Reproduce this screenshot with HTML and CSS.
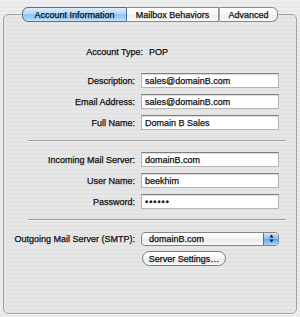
FILE: index.html
```html
<!DOCTYPE html>
<html lang="en">
<head>
    <meta charset="UTF-8">
    <title>Accounts</title>
    <link rel="stylesheet" href="styles.css">
</head>
<body>
    <div class="prefs">
        <div class="tabs">
            <span class="tab tab-account active">Account Information</span>
            <span class="tab tab-mailbox">Mailbox Behaviors</span>
            <span class="tab tab-advanced">Advanced</span>
        </div>

        <div class="panel">
            <div class="row info">
                <label>Account Type:</label>
                <span>POP</span>
            </div>

            <div class="group first">
                <div class="row">
                    <label>Description:</label>
                    <input class="field" type="text" value="sales@domainB.com">
                </div>
                <div class="row">
                    <label>Email Address:</label>
                    <input class="field" type="text" value="sales@domainB.com">
                </div>
                <div class="row">
                    <label>Full Name:</label>
                    <input class="field" type="text" value="Domain B Sales">
                </div>
            </div>

            <div class="separator"></div>

            <div class="group">
                <div class="row">
                    <label>Incoming Mail Server:</label>
                    <input class="field" type="text" value="domainB.com">
                </div>
                <div class="row">
                    <label>User Name:</label>
                    <input class="field" type="text" value="beekhim">
                </div>
                <div class="row">
                    <label>Password:</label>
                    <input class="field" type="password" value="secret">
                </div>
            </div>

            <div class="separator"></div>

            <div class="group smtp">
                <div class="row">
                    <label>Outgoing Mail Server (SMTP):</label>
                    <div class="popup">
                        <span>domainB.com</span>
                        <span class="arrows">
                            <svg width="5" height="9" viewBox="0 0 5 9">
                                <path d="M2.5 0.5 L4.5 3.5 L0.5 3.5 Z M2.5 8.5 L4.5 5.5 L0.5 5.5 Z" fill="#111"/>
                            </svg>
                        </span>
                    </div>
                </div>
                <div class="row">
                    <span></span>
                    <button class="push">Server Settings…</button>
                </div>
            </div>
        </div>
    </div>
</body>
</html>
```

FILE: styles.css
```css
body {
    margin: 0;
    width: 300px;
    height: 317px;
    overflow: hidden;
    font-family: 'Liberation Sans', Arial, sans-serif;
    font-size: 9px;
    color: #111;
    -webkit-text-stroke: 0.25px #111;
    background: repeating-linear-gradient(#eeeeee 0 2px, #e8e8e8 2px 4px);
}

.prefs {
    padding: 7px 3px 0 3px;
}

/* segmented tab control */
.tabs {
    position: relative;
    z-index: 1;
    display: flex;
    justify-content: center;
    height: 15px;
    margin-bottom: -8px;
}

.tab {
    display: flex;
    align-items: center;
    justify-content: center;
    box-sizing: border-box;
    height: 15px;
    border: 1px solid #8a8a8a;
    border-left: none;
    background: linear-gradient(#ffffff 0%, #f7f7f7 50%, #ececec 51%, #fafafa 100%);
}

.tab-account {
    width: 105px;
    border-left: 1px solid #5a6f8c;
    border-color: #5a6f8c;
    border-radius: 6px 0 0 6px;
}

.tab-mailbox { width: 92px; }

.tab-advanced {
    width: 59px;
    border-left: 1px solid #b0b0b0;
    border-radius: 0 6px 6px 0;
}

.tab.active {
    background: linear-gradient(#dcedfd 0%, #b4d7f7 45%, #8cc2f3 52%, #a9d6fb 85%, #cde8fd 100%);
}

/* tab view box */
.panel {
    box-sizing: border-box;
    height: 300px;
    padding-top: 29px;
    border: 1px solid #a3a3a3;
    border-radius: 5px;
    background: repeating-linear-gradient(#e7e7e7 0 2px, #e2e2e2 2px 4px);
    box-shadow: 0 1px 0 #f8f8f8;
}

.row {
    display: grid;
    grid-template-columns: 131px 138px;
    column-gap: 6px;
    align-items: center;
    height: 15px;
}

.row label {
    text-align: right;
    white-space: nowrap;
}

.row.info {
    grid-template-columns: 139px auto;
}

.group {
    display: flex;
    flex-direction: column;
    gap: 6px;
}

.group.first {
    margin-top: 14px;
}

.separator {
    height: 1px;
    margin: 10px 10px 10px 24px;
    background: #9d9d9d;
    border-bottom: 1px solid #f4f4f4;
}

.field {
    box-sizing: border-box;
    width: 138px;
    height: 15px;
    margin: 0;
    padding: 0 3px;
    border: 1px solid #b4b4b4;
    border-top-color: #7e7e7e;
    box-shadow: inset 0 1px 1px rgba(0, 0, 0, 0.15);
    background: #fff;
    font: inherit;
    color: #111;
    outline: none;
}

.field[type="password"] {
    letter-spacing: 1px;
}

.smtp {
    gap: 5px;
}

.popup {
    display: flex;
    align-items: center;
    justify-content: space-between;
    box-sizing: border-box;
    width: 138px;
    height: 14px;
    padding-left: 7px;
    border: 1px solid #858585;
    border-radius: 4px;
    background: linear-gradient(#ffffff 0%, #f4f4f4 50%, #e9e9e9 51%, #fbfbfb 100%);
    overflow: hidden;
}

.arrows {
    display: flex;
    align-items: center;
    justify-content: center;
    width: 14px;
    height: 100%;
    border-left: 1px solid #5a6f8c;
    background: linear-gradient(#cfe6fb 0%, #8fc0f0 45%, #66a7ea 52%, #8ccaf8 90%, #c2e4fc 100%);
}

.push {
    box-sizing: border-box;
    width: 84px;
    height: 15px;
    margin: 0 0 0 1px;
    padding: 0;
    border: 1px solid #7a7a7a;
    border-radius: 8px;
    background: linear-gradient(#ffffff 0%, #f5f5f5 50%, #e6e6e6 51%, #fafafa 100%);
    font: inherit;
    color: #111;
}
```
